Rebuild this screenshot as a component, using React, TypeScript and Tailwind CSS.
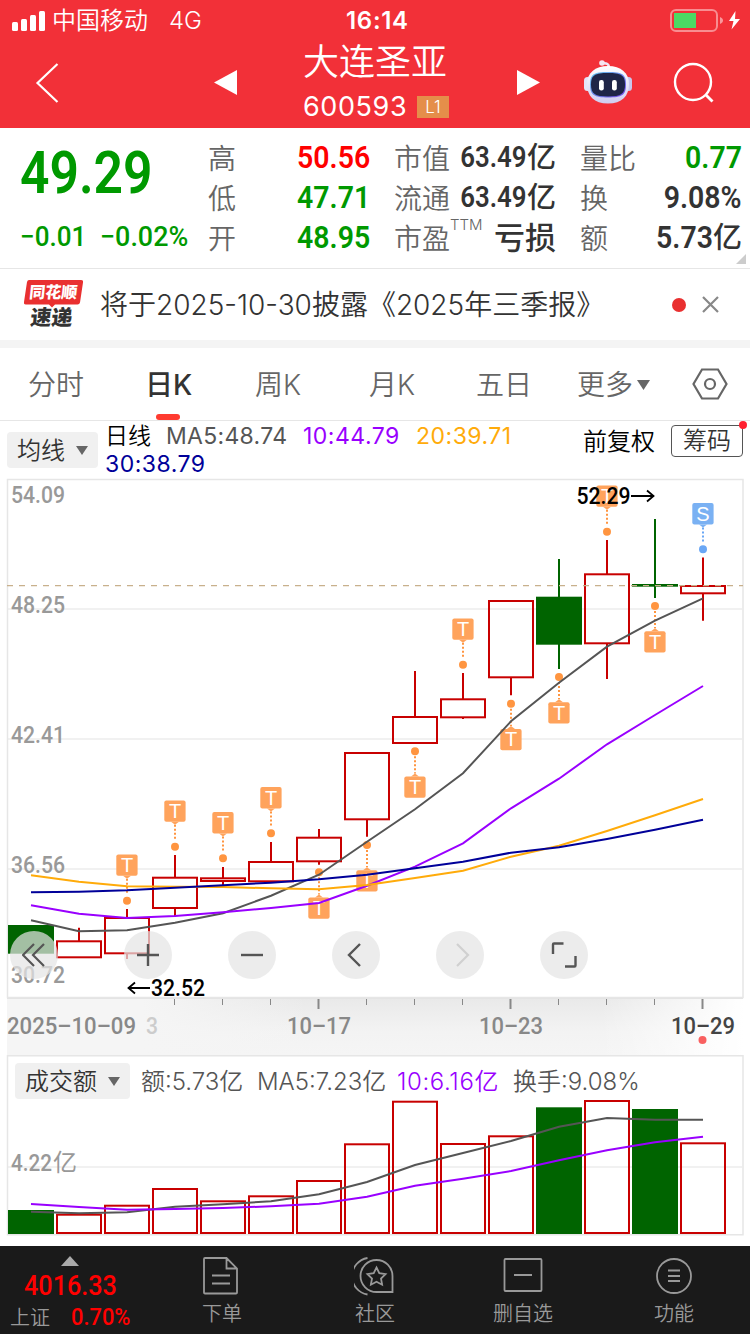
import React from 'react';

const RED = '#c80000';
const GREEN = '#006400';

const xAt = (i: number) => 31 + i * 48;

type Candle = { top: number; bottom: number; high?: number; low?: number; down?: boolean };

const candles: Candle[] = [
  { top: 925, bottom: 953.7, down: true },
  { top: 940.3, bottom: 958.3, high: 927.7 },
  { top: 917, bottom: 954.3, high: 909, low: 959 },
  { top: 876.7, bottom: 909, high: 855, low: 917 },
  { top: 877.3, bottom: 882, high: 867, low: 885.7 },
  { top: 861, bottom: 882.3, high: 842 },
  { top: 836.7, bottom: 862.3, high: 829, low: 864.7 },
  { top: 752, bottom: 820.3, low: 836.7 },
  { top: 716, bottom: 744, high: 671 },
  { top: 698.3, bottom: 718.3, high: 673, low: 719 },
  { top: 600, bottom: 678.3, low: 695.3 },
  { top: 596.7, bottom: 644.7, high: 559, low: 669, down: true },
  { top: 573.3, bottom: 644.3, high: 540, low: 679 },
  { top: 584, bottom: 586.7, high: 519, low: 598, down: true },
  { top: 585, bottom: 594.3, high: 557.5, low: 620.7 },
];

const priceLines = [
  { color: '#555555', ys: [920.3, 931.3, 930.3, 922.7, 913.3, 895.7, 874.7, 841.7, 809.3, 773.3, 721.3, 682.7, 646.7, 620.7, 598.3] },
  { color: '#9900ff', ys: [905.3, 913.7, 918, 916, 912.3, 908, 903, 885.7, 866.7, 843.3, 808.3, 778.7, 744.3, 715, 686] },
  { color: '#ffab0a', ys: [875.3, 881.7, 886.3, 886.7, 887, 888.3, 889.3, 885, 878, 870.7, 856.7, 845.7, 831, 815.3, 799] },
  { color: '#000099', ys: [892.3, 891.7, 890.3, 887.7, 885.3, 882.7, 879.3, 874.7, 868.3, 861.7, 852.7, 847.3, 839, 829.7, 819.7] },
];

// below: the flag hangs under the candle, dot is the y of its anchor
const marks = [
  { i: 2, dot: 900.7 },
  { i: 3, dot: 846.7 },
  { i: 4, dot: 858.3 },
  { i: 5, dot: 833.3 },
  { i: 9, dot: 664.7 },
  { i: 12, dot: 531.7 },
  { i: 14, dot: 549.3, label: 'S' },
  { i: 6, dot: 872.3, below: true },
  { i: 7, dot: 845, below: true },
  { i: 8, dot: 751.3, below: true },
  { i: 10, dot: 703.7, below: true },
  { i: 11, dot: 677, below: true },
  { i: 13, dot: 606, below: true },
];

const volumes = [
  { top: 1210, down: true },
  { top: 1213.7 },
  { top: 1204.7 },
  { top: 1188 },
  { top: 1200.3 },
  { top: 1195.3 },
  { top: 1180 },
  { top: 1143.3 },
  { top: 1100.7 },
  { top: 1143 },
  { top: 1135.3 },
  { top: 1107.3, down: true },
  { top: 1100 },
  { top: 1109, down: true },
  { top: 1142.3 },
];

const volumeLines = [
  { color: '#555555', ys: [1211.7, 1213.3, 1212.3, 1206.7, 1204.3, 1201.3, 1194.3, 1182, 1165, 1153, 1141, 1126.7, 1118, 1119.7, 1119.7] },
  { color: '#9900ff', ys: [1204, 1207, 1209.7, 1209, 1208, 1206.3, 1203.7, 1196.7, 1185.7, 1178.7, 1171, 1160.3, 1150.3, 1142.3, 1136.7] },
];

const toPoints = (ys: number[]) => ys.map((y, i) => `${xAt(i)},${y}`).join(' ');

const StatusBar = () => (
  <div className="flex h-10 items-center pt-px text-white">
    <svg className="ml-3" width="34" height="20" viewBox="0 0 34 20" fill="#fff">
      <rect x="0" y="11" width="6" height="9" rx="1.5" />
      <rect x="9" y="8" width="6" height="12" rx="1.5" />
      <rect x="18" y="4" width="6" height="16" rx="1.5" />
      <rect x="27" y="0" width="6" height="20" rx="1.5" />
    </svg>
    <span className="ml-1.5 mt-px w-[98px] whitespace-nowrap text-[24px] font-[350] leading-none">中国移动</span>
    <span className="ml-[19px] mt-px w-[177px] text-[24px] font-[350] leading-none">4G</span>
    <span className="mt-px w-[64px] whitespace-nowrap text-[24px] font-semibold leading-none tracking-[0.7px]">16:14</span>
    <svg className="ml-auto mr-[8px]" width="73" height="24" viewBox="0 0 73 24">
      <rect x="2" y="1" width="46" height="21" rx="5" fill="none" stroke="#fff" strokeOpacity=".45" strokeWidth="2" />
      <rect x="5" y="4" width="22" height="15" fill="#4cd964" />
      <path d="M51 8v7c4-1.500 4-5.500 0-7z" fill="#fff" fillOpacity=".5" />
      <path d="M66.500 2L60 12h4.500L62.500 20.500 71 10h-5z" fill="#fff" />
    </svg>
  </div>
);

const Robot = () => (
  <svg width="50" height="48" viewBox="0 0 50 48">
    <defs>
      <linearGradient id="shell" x1="0" y1="0" x2="0" y2="1">
        <stop offset="0" stopColor="#fff" />
        <stop offset="1" stopColor="#cfcdf0" />
      </linearGradient>
      <linearGradient id="visor" x1="0" y1="0" x2="1" y2="1">
        <stop offset="0" stopColor="#65c8ee" />
        <stop offset="1" stopColor="#7747e8" />
      </linearGradient>
    </defs>
    <path d="M19 5.500c5-1 7 1 7 4" fill="none" stroke="#f1e6f5" strokeWidth="2.500" />
    <circle cx="19" cy="5" r="2.800" fill="#f6e4f0" />
    <rect x="1" y="19" width="7" height="14" rx="3.500" fill="#e4e4f8" />
    <rect x="42" y="19" width="7" height="14" rx="3.500" fill="#c9c7ec" />
    <path d="M25 8C38 8 46 15 46 26C46 38 39 45.500 25 45.500S4 38 4 26C4 15 12 8 25 8z" fill="url(#shell)" />
    <path d="M25 14C39 14 43 16 43 26.500S39 39.500 25 39.500 7 37 7 26.500 11 14 25 14z" fill="url(#visor)" />
    <path d="M25 15C38 15 42 17 42 26.500S38 38.500 25 38.500 8 36 8 26.500 12 15 25 15z" fill="#1f2547" />
    <rect x="16" y="22" width="4.800" height="10.500" rx="2.200" fill="#fff" />
    <rect x="29" y="22" width="4.800" height="10.500" rx="2.200" fill="#fff" />
  </svg>
);

const Header = () => (
  <header className="flex h-[88px] items-start text-white">
    <svg className="ml-[35px] mt-[22px]" width="24" height="42" viewBox="0 0 24 42" fill="none" stroke="#fff" strokeWidth="2.200">
      <path d="M22.500 2L2.500 21l20 19" />
    </svg>
    <svg className="ml-[155px] mt-[29px]" width="24" height="27" viewBox="0 0 24 27" fill="#fff">
      <path d="M23 1v25L0 13.500z" />
    </svg>
    <div className="ml-[65px] w-[148px]">
      <div className="mt-1 whitespace-nowrap text-[36px] font-[350] leading-[36px]">大连圣亚</div>
      <div className="mt-[13px] flex items-center">
        <span className="w-[114px] text-[27px] leading-[28px] tracking-[0.6px]">600593</span>
        <span className="flex h-[22px] w-8 items-center justify-center bg-[#e58e4a] text-[17px] font-[350] leading-none">L1</span>
      </div>
    </div>
    <svg className="ml-[65px] mt-[29px]" width="24" height="27" viewBox="0 0 24 27" fill="#fff">
      <path d="M1 1v25l23-12.500z" />
    </svg>
    <div className="ml-[43px] mt-[18px]">
      <Robot />
    </div>
    <svg className="ml-[40px] mt-[22px]" width="42" height="42" viewBox="0 0 42 42" fill="none" stroke="#fff" strokeWidth="2.400">
      <circle cx="20" cy="20" r="18" />
      <path d="M32.500 32.500l7 7" strokeWidth="2.800" />
    </svg>
  </header>
);

const Stat = ({ label, sup, children }: { label: string; sup?: string; children: React.ReactNode }) => (
  <div className="flex h-10 w-[162px] items-center justify-between">
    <span className="relative mt-[3px] text-[28px] font-[350] leading-none text-[#666666]">
      {label}
      {sup && <sup className="absolute -top-2 left-full text-[15px] leading-none">{sup}</sup>}
    </span>
    {children}
  </div>
);

const Figure = ({ className = '', unit, children }: { className?: string; unit?: string; children: string }) => (
  <span className={`flex items-center whitespace-nowrap leading-none text-[#333333] ${className}`}>
    <span className="inline-block origin-right scale-x-[0.89] font-[Roboto] font-semibold">{children}</span>
    {unit && <span className="text-[29px] font-medium">{unit}</span>}
  </span>
);

const Quote = () => (
  <section className="relative flex h-[141px] border-b border-[#e6e6e6] pt-[9px]">
    <div className="w-[208px] pl-[20px] font-[Roboto] text-[#009900]">
      <div className="mt-[6px] origin-left scale-x-[0.86] text-[60px] font-semibold leading-[60px]">49.29</div>
      <div className="mt-[20px] flex text-[28px] font-medium leading-[28px]">
        <span className="w-[80px] origin-left scale-x-[0.93] whitespace-nowrap">−0.01</span>
        <span className="origin-left scale-x-[0.96] whitespace-nowrap">−0.02%</span>
      </div>
    </div>
    <div>
      <Stat label="高"><Figure className="text-[32px] text-[#ff0000]!">50.56</Figure></Stat>
      <Stat label="低"><Figure className="text-[32px] text-[#009900]!">47.71</Figure></Stat>
      <Stat label="开"><Figure className="text-[32px] text-[#009900]!">48.95</Figure></Stat>
    </div>
    <div className="ml-6">
      <Stat label="市值"><Figure className="text-[29px]" unit="亿">63.49</Figure></Stat>
      <Stat label="流通"><Figure className="text-[29px]" unit="亿">63.49</Figure></Stat>
      <Stat label="市盈" sup="TTM"><span className="text-[31px] font-medium leading-none text-[#333333]">亏损</span></Stat>
    </div>
    <div className="ml-6">
      <Stat label="量比"><Figure className="text-[32px] text-[#009900]!">0.77</Figure></Stat>
      <Stat label="换"><Figure className="text-[32px]">9.08%</Figure></Stat>
      <Stat label="额"><Figure className="text-[32px]" unit="亿">5.73</Figure></Stat>
    </div>
    <svg className="absolute right-1 bottom-[4px]" width="10" height="10" viewBox="0 0 10 10" fill="#cccccc">
      <path d="M10 0v10H0z" />
    </svg>
  </section>
);

const Notice = () => (
  <section className="flex h-[71px] items-center">
    <div className="relative ml-6 h-[50px] w-[59px]">
      <svg className="absolute inset-0" width="59" height="28" viewBox="0 0 59 28" fill="#e93030">
        <path d="M5 0h52q2.500 0 2 2.500l-3 20q-.5 2-2.500 2H31l-3 3-3-3H2q-2.500 0-2-2.500l3-20Q3.500 0 5 0z" />
      </svg>
      <div className="relative -skew-x-6 text-center text-[16px] font-black leading-[24px] text-white">同花顺</div>
      <div className="relative -ml-1 -skew-x-6 text-center text-[21px] font-black leading-[27px] text-[#333333]">速递</div>
    </div>
    <span className="ml-[17px] whitespace-nowrap text-[28px] font-[350] leading-none text-[#333333]">将于2025-10-30披露《2025年三季报》</span>
    <span className="ml-auto size-[14px] rounded-full bg-[#e93030]" />
    <svg className="ml-4 mr-[31px]" width="17" height="17" viewBox="0 0 17 17" stroke="#888888" strokeWidth="2.200">
      <path d="M1 1l15 15M16 1L1 16" />
    </svg>
  </section>
);

const Tabs = () => (
  <nav className="flex h-[73px] items-center border-b border-[#e6e6e6] text-[28px] font-[350] leading-none text-[#666666]">
    <span className="mt-px w-[117px] pl-7">分时</span>
    <span className="relative flex h-full w-[110px] items-center pl-7 pt-px font-medium text-[#333333]">
      日K
      <i className="absolute bottom-0 left-[39px] h-[6px] w-6 rounded-full bg-[#ff3b30]" />
    </span>
    <span className="mt-px w-[114px] pl-7">周K</span>
    <span className="mt-px w-[107px] pl-7">月K</span>
    <span className="mt-px w-[101px] pl-7">五日</span>
    <span className="mt-px flex items-center pl-7">
      更多
      <svg className="ml-1" width="13" height="10" viewBox="0 0 13 10" fill="#666666"><path d="M0 0h13L6.500 10z" /></svg>
    </span>
    <svg className="ml-auto mr-[22px]" width="36" height="32" viewBox="0 0 36 32" fill="none" stroke="#666666" strokeWidth="2.200">
      <path d="M10 1.500h16L34.500 16 26 30.500H10L1.500 16z" />
      <circle cx="18" cy="16" r="5" />
    </svg>
  </nav>
);

const Picker = ({ label, className = '' }: { label: string; className?: string }) => (
  <span className={`inline-flex h-9 shrink-0 items-center justify-between rounded bg-[#f0f0f0] px-2.5 text-[24px] font-[350] leading-none whitespace-nowrap text-[#333333] ${className}`}>
    <span className="pt-px">{label}</span>
    <svg className="shrink-0" width="12" height="9" viewBox="0 0 12 9" fill="#666666"><path d="M0 0h12L6 9z" /></svg>
  </span>
);

const Indicators = () => (
  <section className="flex h-[57px] items-start pl-[7px]">
    <div className="mt-[11px] w-[98px]"><Picker label="均线" className="w-[91px]" /></div>
    <div className="mt-px w-[460px] text-[23px] leading-[28px] tracking-[0.5px]">
      <div className="flex whitespace-nowrap">
        <span className="w-[61px] font-[350] tracking-normal text-black">日线</span>
        <span className="w-[137px] tracking-[0.3px] text-[#555555]">MA5:48.74</span>
        <span className="w-[113px] text-[#9900ff]">10:44.79</span>
        <span className="text-[#ffab0a]">20:39.71</span>
      </div>
      <div className="text-[#000099]">30:38.79</div>
    </div>
    <span className="ml-[18px] mt-[9px] text-[24px] leading-none font-[350] text-black">前复权</span>
    <span className="relative ml-[16px] mt-1 flex h-8 w-[72px] items-center justify-center rounded border border-[#555555] text-[24px] font-[350] leading-none text-[#333333]">
      筹码
      <i className="absolute -top-[5px] -right-[5px] size-2 rounded-full bg-[#ff2030]" />
    </span>
  </section>
);

const Flag = ({ i, dot, label = 'T', below }: { i: number; dot: number; label?: string; below?: boolean }) => {
  const x = xAt(i);
  const box = below ? dot + 25.200 : dot - 46.200;
  const tip = below ? box - 3 : box + 24.300;
  const edge = below ? box : box + 21.300;
  const blue = label === 'S';
  return (
    <g>
      <path d={`M${x} ${below ? dot + 5 : tip}V${below ? tip : dot - 6}`} stroke={blue ? '#6aa7f5' : '#ff9540'} strokeWidth="2" strokeDasharray="2 2" />
      <circle cx={x} cy={dot} r="4" fill={blue ? '#6aa7f5' : '#ff9540'} />
      <g fill={blue ? '#7ab1f3' : '#ffa35c'}>
        <path d={`M${x - 4} ${edge}L${x} ${tip}L${x + 4} ${edge}z`} />
        <rect x={x - 10.700} y={box} width="21.300" height="21.300" rx="2" />
      </g>
      <text x={x} y={box + 17.500} textAnchor="middle" fontFamily='"Liberation Sans", sans-serif' fontSize="20" fill="#fff">{label}</text>
    </g>
  );
};

const circle = 'flex size-12 items-center justify-center rounded-full bg-[rgba(228,228,228,0.714)]';

const Controls = () => (
  <div className="absolute top-[453px] left-[10px] flex items-center">
    <span className={`${circle} mr-[66px]`}>
      <svg width="24" height="24" viewBox="0 0 24 24" fill="none" stroke="#555555" strokeWidth="2.200"><path d="M12 1L1 12l11 11M22 1L11 12l11 11" /></svg>
    </span>
    <div className="flex gap-14">
      <span className={circle}>
        <svg width="24" height="24" viewBox="0 0 24 24" stroke="#555555" strokeWidth="2.400"><path d="M1 12h22M12 1v22" /></svg>
      </span>
      <span className={circle}>
        <svg width="24" height="24" viewBox="0 0 24 24" stroke="#555555" strokeWidth="2.400"><path d="M1 12h22" /></svg>
      </span>
      <span className={circle}>
        <svg width="24" height="24" viewBox="0 0 24 24" fill="none" stroke="#555555" strokeWidth="2.400"><path d="M16 1L5 12l11 11" /></svg>
      </span>
      <span className={circle}>
        <svg width="24" height="24" viewBox="0 0 24 24" fill="none" stroke="#d0d0d0" strokeWidth="2.200"><path d="M9 1l11 11L9 23" /></svg>
      </span>
      <span className={circle}>
        <svg width="26" height="26" viewBox="0 0 26 26" fill="none" stroke="#555555" strokeWidth="2.400"><path d="M2 12V2.500q0-1 1-1h9.500M24.500 14v9.500q0 1-1 1H14" /></svg>
      </span>
    </div>
  </div>
);

const KChart = () => (
  <section className="relative h-[520px]">
    <svg className="block overflow-visible" width="750" height="520" viewBox="0 478 750 520" fontFamily='Inter, "Noto Sans CJK SC", sans-serif'>
      <path d="M8 609H742M8 739H742M8 869H742" stroke="#f1f1f1" strokeWidth="2" />
      <path d="M7.500 479.500H743V997.500H7.500z" fill="none" stroke="#e6e6e6" strokeWidth="1.500" />
      <g fontFamily="Roboto" fontSize="24" fontWeight="500" fill="#999999">
        {[['54.09', 503], ['48.25', 613], ['42.41', 743], ['36.56', 873], ['30.72', 983]].map(([t, y]) => (
          <text key={t} x="11" y={y} textLength="54" lengthAdjust="spacingAndGlyphs">{t}</text>
        ))}
      </g>
      {candles.map((c, i) => {
        const x = xAt(i);
        const color = c.down ? GREEN : RED;
        return (
          <g key={i} stroke={color} strokeWidth="2">
            {c.high && <path d={`M${x} ${c.high}V${c.top + 1}`} />}
            {c.low && <path d={`M${x} ${c.bottom - 1}V${c.low}`} />}
            {c.down ? (
              <rect x={x - 23} y={c.top} width="46" height={c.bottom - c.top} fill={color} stroke="none" />
            ) : (
              <rect x={x - 22} y={c.top + 1} width="44" height={c.bottom - c.top - 2} fill="none" />
            )}
          </g>
        );
      })}
      <path d="M7 585.700H743" stroke="#c8b08c" strokeWidth="1.200" strokeDasharray="6 6" />
      {marks.map((m) => <Flag key={m.i} {...m} />)}
      {priceLines.map((l) => (
        <polyline key={l.color} points={toPoints(l.ys)} fill="none" stroke={l.color} strokeWidth="2" />
      ))}
      <g fontFamily="Roboto" fontSize="24" fontWeight="500" fill="#000">
        <text x="576.500" y="504" textLength="54" lengthAdjust="spacingAndGlyphs">52.29</text>
        <text x="151" y="996" textLength="54" lengthAdjust="spacingAndGlyphs">32.52</text>
      </g>
      <path d="M631 496h22M647 490.500l6.500 5.500-6.500 5.500M150 988h-21M135 982.500l-6.500 5.500 6.500 5.500" fill="none" stroke="#000" strokeWidth="1.800" />
    </svg>
    <Controls />
  </section>
);

const TimeAxis = () => (
  <section className="h-[57px]">
    <svg className="block" width="750" height="57" viewBox="0 998 750 57" fontFamily="Roboto" fontSize="24" fontWeight="500">
      <defs>
        <linearGradient id="band" x1="0" y1="0" x2="0" y2="1">
          <stop offset="0" stopColor="#e9e9e9" />
          <stop offset=".6" stopColor="#f3f3f3" />
          <stop offset="1" stopColor="#f5f5f5" />
        </linearGradient>
        <linearGradient id="fadeRight" x1="0" y1="0" x2="1" y2="0">
          <stop offset="0" stopColor="#fff" stopOpacity="0" />
          <stop offset="1" stopColor="#fff" />
        </linearGradient>
        <linearGradient id="fadeLeft" x1="0" y1="0" x2="1" y2="0">
          <stop offset="0" stopColor="#f5f5f5" />
          <stop offset=".45" stopColor="#f5f5f5" />
          <stop offset="1" stopColor="#f5f5f5" stopOpacity="0" />
        </linearGradient>
      </defs>
      <rect x="7" y="998" width="736" height="57" fill="url(#band)" />
      <rect x="7" y="998" width="300" height="57" fill="url(#fadeLeft)" />
      <rect x="600" y="998" width="144" height="57" fill="url(#fadeRight)" />
      <path d="M7 998.500H743" stroke="#e3e3e3" />
      {candles.map((_, i) => {
        if (i < 3) return null;
        const major = i === 6 || i === 10 || i === 14;
        return <path key={i} d={`M${xAt(i) - 0.500} 999V${major ? 1009 : 1005}`} stroke="#888888" strokeWidth={major ? 2 : 1} />;
      })}
      <g fill="#888888">
        <text x="7" y="1034" textLength="129" lengthAdjust="spacingAndGlyphs">2025–10–09</text>
        <text x="146" y="1034" textLength="12" lengthAdjust="spacingAndGlyphs" fill="#cccccc">3</text>
        <text x="287" y="1034" textLength="64" lengthAdjust="spacingAndGlyphs">10–17</text>
        <text x="479" y="1034" textLength="64" lengthAdjust="spacingAndGlyphs">10–23</text>
        <text x="671" y="1034" textLength="64" lengthAdjust="spacingAndGlyphs" fill="#444444">10–29</text>
      </g>
      <circle cx="702.500" cy="1040" r="4" fill="#f96060" />
    </svg>
  </section>
);

const Volume = () => (
  <section className="relative h-[191px]">
    <svg className="block" width="750" height="181" viewBox="0 1055 750 181">
      <path d="M8 1167H742" stroke="#f1f1f1" strokeWidth="2" />
      <path d="M7.500 1055.800H743V1234.800H7.500z" fill="none" stroke="#e6e6e6" strokeWidth="1.500" />
      <text x="11" y="1171" fontFamily="Roboto" fontSize="24" fontWeight="500" fill="#999999" textLength="41" lengthAdjust="spacingAndGlyphs">4.22</text>
      <text x="53" y="1171" fontFamily='"Noto Sans CJK SC", sans-serif' fontSize="24" fill="#999999">亿</text>
      {volumes.map((v, i) =>
        v.down ? (
          <rect key={i} x={xAt(i) - 23} y={v.top} width="46" height={1234 - v.top} fill={GREEN} />
        ) : (
          <rect key={i} x={xAt(i) - 22} y={v.top + 1} width="44" height={1232 - v.top} fill="none" stroke={RED} strokeWidth="2" />
        ),
      )}
      {volumeLines.map((l) => (
        <polyline key={l.color} points={toPoints(l.ys)} fill="none" stroke={l.color} strokeWidth="2" />
      ))}
    </svg>
    <div className="absolute top-2 left-[15px] flex items-center whitespace-nowrap text-[24px] leading-none text-[#555555]">
      <Picker label="成交额" className="w-[115px]" />
      <span className="ml-[11px] w-[116px] pt-px font-[350]">额:5.73亿</span>
      <span className="w-[140px] pt-px font-[350]">MA5:7.23亿</span>
      <span className="w-[116px] pt-px font-[350] tracking-[0.6px] text-[#9900ff]">10:6.16亿</span>
      <span className="pt-px font-[350]">换手:9.08%</span>
    </div>
  </section>
);

const navItems = [
  {
    label: '下单',
    className: 'ml-[52px] w-[82px]',
    icon: <path d="M4 2h21.500L36 12.500V36.500q0 1-1 1H4q-1 0-1-1V3q0-1 1-1zM25.500 2v10.500H36M11 19.500h18M11 27.500h18" />,
  },
  {
    label: '社区',
    className: 'ml-[70px] w-[84px]',
    icon: (
      <>
        <path d="M22.500 4A16 16 0 1 0 22.500 36H38.500V20A16 16 0 0 0 22.500 4z" />
        <path d="M13.500 2a18.500 18.500 0 0 0 0 36.500" />
        <path d="M22.500 11.500l2.800 5.700 6.200.9-4.500 4.400 1.100 6.200-5.600-2.900-5.600 2.900 1.100-6.200-4.500-4.400 6.200-.9z" />
      </>
    ),
  },
  {
    label: '删自选',
    className: 'ml-[63px] w-[86px]',
    icon: <path d="M3.500 3h35q1 0 1 1v30q0 1-1 1h-35q-1 0-1-1V4q0-1 1-1zM12 19h18" />,
  },
  {
    label: '功能',
    className: 'ml-[68px] w-[80px]',
    icon: (
      <>
        <circle cx="21" cy="20" r="17" />
        <path d="M15 14.500h12M15 20h12M15 25h12" />
      </>
    ),
  },
];

const BottomBar = () => (
  <footer className="flex h-[88px] bg-[#1a1a1a] text-[#999999]">
    <div className="flex w-[130px] shrink-0 flex-col">
      <svg className="mt-[10px] ml-[61px]" width="18" height="10" viewBox="0 0 18 10" fill="#aaaaaa"><path d="M9 0l9 10H0z" /></svg>
      <div className="mt-[6px] ml-6 w-[106px] origin-left scale-x-[0.9] whitespace-nowrap font-[Roboto] text-[28px] font-medium leading-[28px] text-[#ff0000]">4016.33</div>
      <div className="mt-[4px] flex items-center">
        <span className="ml-[10px] mt-px w-[61px] shrink-0 text-[20px] font-[350] leading-none">上证</span>
        <span className="origin-left scale-x-[0.91] font-[Roboto] text-[24px] font-medium leading-[26px] text-[#ff0000]">0.70%</span>
      </div>
    </div>
    <div className="-ml-px flex flex-1">
      {navItems.map((item) => (
        <div key={item.label} className={`flex shrink-0 flex-col items-center pt-[10px] ${item.className}`}>
          <svg width="42" height="40" viewBox="0 0 42 40" fill="none" stroke="#999999" strokeWidth="1.800">{item.icon}</svg>
          <span className="mt-[8px] whitespace-nowrap text-[20px] font-[350] leading-none">{item.label}</span>
        </div>
      ))}
    </div>
  </footer>
);

const App = () => {
  return (
    <div className="h-[1334px] w-[750px] overflow-hidden bg-white font-[Inter,'Noto_Sans_CJK_SC',sans-serif]">
      <div className="bg-[#f23038]">
        <StatusBar />
        <Header />
      </div>
      <Quote />
      <Notice />
      <div className="h-2 bg-[#f4f4f4]" />
      <Tabs />
      <Indicators />
      <KChart />
      <TimeAxis />
      <Volume />
      <BottomBar />
    </div>
  );
};

export default App;
